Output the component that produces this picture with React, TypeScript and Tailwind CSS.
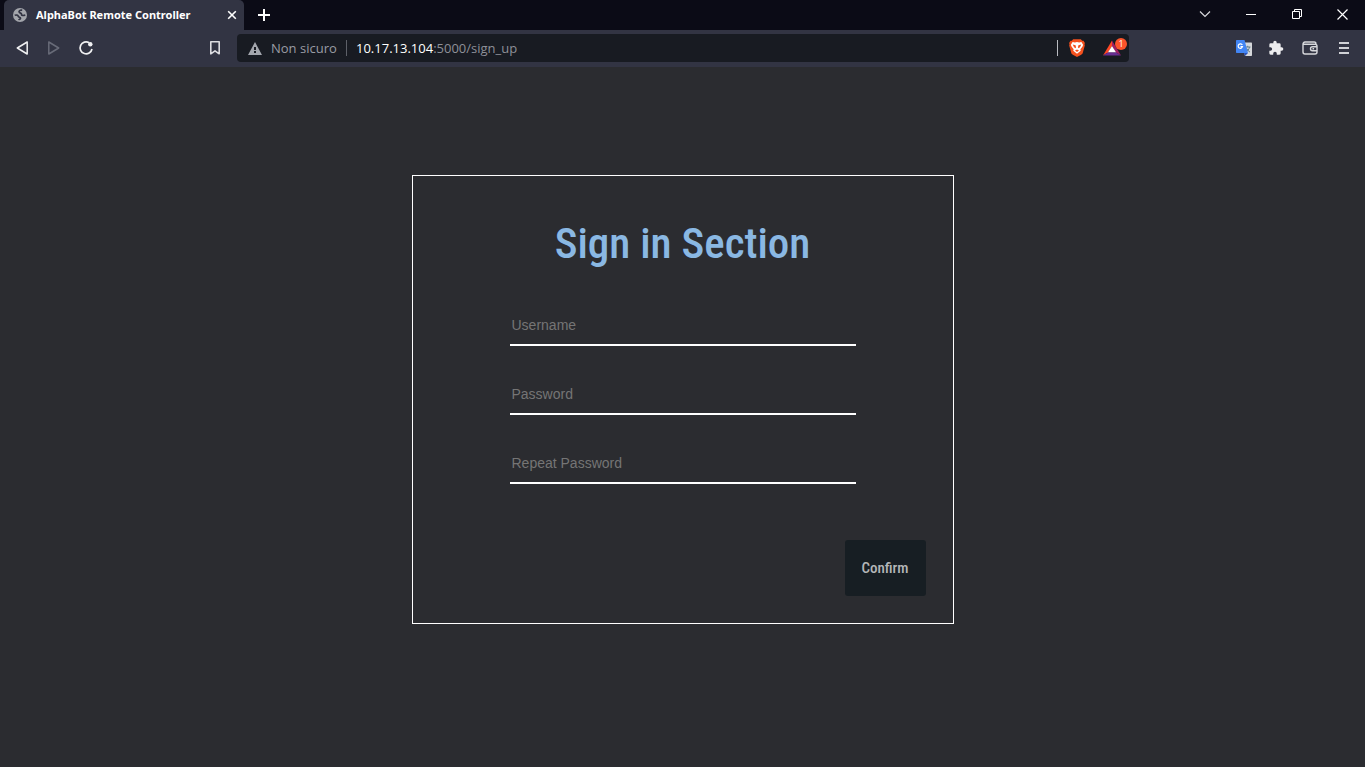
import type { ReactNode } from "react";

function IconButton({ label, className = "", children }: { label: string; className?: string; children: ReactNode }) {
  return (
    <button type="button" aria-label={label} className={`flex shrink-0 items-center justify-center ${className}`}>
      {children}
    </button>
  );
}

function GlobeIcon() {
  return (
    <svg width="14" height="14" viewBox="0 0 14 14" aria-hidden="true">
      <circle cx="7" cy="7" r="7" fill="#a3a5ab" />
      <path
        d="M9.200 2.200C6.800 2 5.600 3 6.200 4.200S8.600 5 8.500 6.300 10 7.800 12.300 7M1.700 7.300c1.800-.6 3.300-.2 3.600 1S7.700 9 7.500 10.300 6 11 5.800 12.200"
        fill="none"
        stroke="#323443"
        strokeWidth="1.700"
      />
    </svg>
  );
}

function TabStrip() {
  return (
    <div className="flex h-[30px] items-stretch bg-[#0b0b16] pl-1 text-white">
      <div className="flex w-60 items-center rounded-t-[5px] bg-[#323443] pr-[6px] pl-[9px]">
        <GlobeIcon />
        <span className="ml-[9px] grow font-['Noto_Sans','Open_Sans',sans-serif] text-[11px] leading-4 font-bold whitespace-nowrap">
          AlphaBot Remote Controller
        </span>
        <IconButton label="Close tab" className="size-3">
          <svg width="10" height="10" viewBox="0 0 10 10" stroke="#fff" strokeWidth="1.600">
            <path d="m1.200 1.200 7.600 7.600M8.800 1.200 1.200 8.800" />
          </svg>
        </IconButton>
      </div>
      <IconButton label="New tab" className="w-10">
        <svg width="12" height="12" viewBox="0 0 12 12" stroke="#fff" strokeWidth="2">
          <path d="M6 0v12M0 6h12" />
        </svg>
      </IconButton>
      <div className="ml-auto flex pb-[2px]">
        <IconButton label="Search tabs" className="w-[46px]">
          <svg width="12" height="8" viewBox="0 0 12 8" fill="none" stroke="#d8d8dc" strokeWidth="1.200">
            <path d="m1 1.500 5 5 5-5" />
          </svg>
        </IconButton>
        <IconButton label="Minimize" className="w-[46px]">
          <svg width="10" height="10" viewBox="0 0 10 10" stroke="#fff">
            <path d="M0 5.500h10" />
          </svg>
        </IconButton>
        <IconButton label="Restore" className="w-[46px]">
          <svg width="10" height="10" viewBox="0 0 10 10" fill="none" stroke="#fff">
            <path d="M.5 2.500h7v7h-7ZM2.500 2.500v-2h7v7h-2" />
          </svg>
        </IconButton>
        <IconButton label="Close" className="w-[45px]">
          <svg width="11" height="11" viewBox="0 0 11 11" stroke="#fff" strokeWidth="1.200">
            <path d="m.5.5 10 10M10.500.5l-10 10" />
          </svg>
        </IconButton>
      </div>
    </div>
  );
}

function BraveIcon() {
  return (
    <svg width="16" height="18" viewBox="0 0 16 18" aria-hidden="true">
      <path d="M4.200.3h7.600l1.400 1.500 1.300-.1 1.400 2.200-.4 1.400.3 1.200-2 7.200c-.3 1-.8 1.500-1.600 2L8 18l-4.200-2.300c-.8-.5-1.300-1-1.600-2L.2 6.500l.3-1.200L.1 3.900l1.400-2.200 1.300.1Z" fill="#f4511e" />
      <path d="m3.600 3.100 2.300.4L8 3l2.100.5 2.300-.4 1.700 2.600-.6 1.900-2.100 2.700.3 1.400L8 14.800l-3.700-3.100.3-1.400-2.100-2.700-.6-1.900Z" fill="#fff" />
      <path d="M3.700 5.600 6.600 6.300 7 8.300 6.600 9.300 5 8.200ZM12.300 5.600 9.400 6.300 9 8.300 9.400 9.300 11 8.200ZM6 11.600 8 10.500l2 1.100-2 1.400Z" fill="#f4511e" />
    </svg>
  );
}

function AddressBar() {
  return (
    <div className="flex h-7 w-[892px] min-w-0 items-center rounded-[4px] bg-[#181b22] pr-2 pl-[11px] font-['Open_Sans','Noto_Sans',sans-serif] text-[13px] leading-5">
      <svg className="shrink-0" width="14" height="13" viewBox="0 0 14 13" aria-hidden="true">
        <path d="M7 0 14 13H0Z" fill="#a3a6ad" />
        <path d="M6 5h2v3H6ZM6 9h2v2H6Z" fill="#181b22" />
      </svg>
      <span className="ml-[9px] w-[75px] shrink-0 whitespace-nowrap text-[#9a9ca4]">Non sicuro</span>
      <span className="h-4 w-px shrink-0 bg-[#5d6068]" />
      <a href="/sign_up" className="ml-[9px] grow whitespace-nowrap text-[#8e9098]">
        <span className="text-white">10.17.13.104</span>:5000/sign_up
      </a>
      <span className="h-4 w-px shrink-0 bg-[#b9bbc1]" />
      <IconButton label="Brave Shields" className="ml-[11px] w-4">
        <BraveIcon />
      </IconButton>
      <IconButton label="Brave Rewards" className="relative ml-[17px] w-[19px]">
        <svg width="18" height="16" viewBox="0 0 19 16">
          <path d="M9.500 0 0 16l5.500-3.500 4-6.500Z" fill="#ff4724" />
          <path d="m9.500 0 9.500 16-5.500-3.500-4-6.500Z" fill="#9e1f63" />
          <path d="M0 16h19l-5.500-3.500h-8Z" fill="#662d91" />
          <path d="m9.500 5.800 4.200 6.800H5.300Z" fill="#fff" />
        </svg>
        <span className="absolute -top-[2px] -right-[6px] flex size-3 items-center justify-center rounded-full bg-[#fb542b] text-[9px] leading-3 text-white">
          1
        </span>
      </IconButton>
    </div>
  );
}

function Toolbar() {
  return (
    <div className="flex h-[37px] items-center bg-[#323443] pr-[13px] pb-px pl-[14px]">
      <IconButton label="Back" className="size-4">
        <svg width="14" height="16" viewBox="0 0 14 16" fill="none" stroke="#f0f0f2" strokeWidth="1.500" strokeLinejoin="round">
          <path d="M12.200 2v12L2.300 8Z" />
        </svg>
      </IconButton>
      <IconButton label="Forward" className="ml-4 size-4">
        <svg width="14" height="16" viewBox="0 0 14 16" fill="none" stroke="#686b78" strokeWidth="1.500" strokeLinejoin="round">
          <path d="M1.800 2v12l9.900-6Z" />
        </svg>
      </IconButton>
      <IconButton label="Reload" className="ml-4 size-4">
        <svg width="16" height="16" viewBox="0 0 16 16" fill="none" stroke="#f0f0f2" strokeWidth="1.700">
          <path d="M11.200 2.700A6 6 0 1 0 14 9" />
          <circle cx="12.300" cy="4.200" r="2.200" fill="#f0f0f2" stroke="none" />
        </svg>
      </IconButton>
      <IconButton label="Bookmark this page" className="ml-[113px] size-4">
        <svg width="12" height="16" viewBox="0 0 12 16" fill="none" stroke="#dcdce0" strokeWidth="1.600" strokeLinejoin="round">
          <path d="M1.800 1.800h8.400v12L6 10.800l-4.200 3Z" />
        </svg>
      </IconButton>
      <div className="ml-[14px] flex min-w-0">
        <AddressBar />
      </div>
      <div className="ml-auto flex items-center gap-4">
        <IconButton label="Translate" className="size-4">
          <svg width="16" height="16" viewBox="0 0 16 16">
            <path d="M6 2.500h9.300a.7.700 0 0 1 .7.700V15.300a.7.700 0 0 1-.7.700H9Z" fill="#d5d7da" />
            <path d="M9 7h5.500M11.700 5.800V7M13.500 7c-.4 2.400-2 4-3.500 5M10.700 8.500c.7 1.700 1.900 2.800 3.300 3.600" stroke="#607d8b" strokeWidth="1" fill="none" />
            <path d="M.7 0h7.800L12 13H.7a.7.700 0 0 1-.7-.7V.7A.7.700 0 0 1 .7 0Z" fill="#4285f4" />
            <path d="m8 13 4 0-3 3Z" fill="#2850b8" />
            <path d="M6.300 5A2.200 2.200 0 1 0 6.500 6.700H4.500" stroke="#fff" strokeWidth="1.200" fill="none" />
          </svg>
        </IconButton>
        <IconButton label="Extensions" className="size-4">
          <svg width="16" height="16" viewBox="0 0 24 24" fill="#ececee">
            <path d="M20.500 11H19V7a2 2 0 0 0-2-2h-4V3.500a2.500 2.500 0 0 0-5 0V5H4a2 2 0 0 0-2 2v3.800h1.500a2.700 2.700 0 0 1 0 5.400H2V20a2 2 0 0 0 2 2h3.800v-1.500a2.700 2.700 0 0 1 5.400 0V22H17a2 2 0 0 0 2-2v-4h1.500a2.500 2.500 0 0 0 0-5Z" />
          </svg>
        </IconButton>
        <IconButton label="Wallet" className="ml-[2px] size-4">
          <svg width="16" height="14" viewBox="0 0 16 14" fill="none" stroke="#d7d8dc" strokeWidth="1.400" strokeLinejoin="round">
            <path d="M1 3.200A2 2 0 0 1 3 1h9.200a1.800 1.800 0 0 1 1.800 1.800M1 3.200V11a2 2 0 0 0 2 2h10a2 2 0 0 0 2-2V5.200a2 2 0 0 0-2-2H1" />
            <path d="M15 5.700h-4.500a2 2 0 0 0 0 4H15M10.500 7.700h1.600" />
          </svg>
        </IconButton>
        <IconButton label="Menu" className="ml-[2px] size-4">
          <svg width="10" height="12" viewBox="0 0 10 12" stroke="#d0d1d6" strokeWidth="2">
            <path d="M0 1h10M0 6h10M0 11h10" />
          </svg>
        </IconButton>
      </div>
    </div>
  );
}

function Field({ id, label, type = "text" }: { id: string; label: string; type?: string }) {
  return (
    <input
      id={id}
      name={id}
      type={type}
      aria-label={label}
      placeholder={label}
      className="block h-[41px] w-full border-b-2 border-white bg-transparent px-[2px] font-['Liberation_Sans',Arial,sans-serif] text-[14px] text-white outline-none placeholder:text-[#757575]"
    />
  );
}

export default function App() {
  return (
    <div className="flex min-h-screen flex-col bg-[#2b2c30]">
      <header>
        <TabStrip />
        <Toolbar />
      </header>
      <main className="flex grow justify-center px-4 pt-[108px] pb-8">
        <form className="flex w-full max-w-[542px] flex-col self-start border border-white px-[27px] pt-10 pb-[27px]">
          <h1 className="text-center font-['Roboto_Condensed','Lato',sans-serif] text-[43px] leading-[54px] font-medium text-[#8ab8e3]">
            Sign in Section
          </h1>
          <div className="mt-[35px] flex flex-col gap-7 px-[70px]">
            <Field id="username" label="Username" />
            <Field id="password" label="Password" type="password" />
            <Field id="repeat-password" label="Repeat Password" type="password" />
          </div>
          <button
            type="button"
            className="mt-14 h-14 w-[81px] self-end rounded-[3px] bg-[#171e23] font-['Roboto_Condensed','Lato',sans-serif] text-[15px] font-medium text-[#b4b6b8]"
          >
            Confirm
          </button>
        </form>
      </main>
    </div>
  );
}
